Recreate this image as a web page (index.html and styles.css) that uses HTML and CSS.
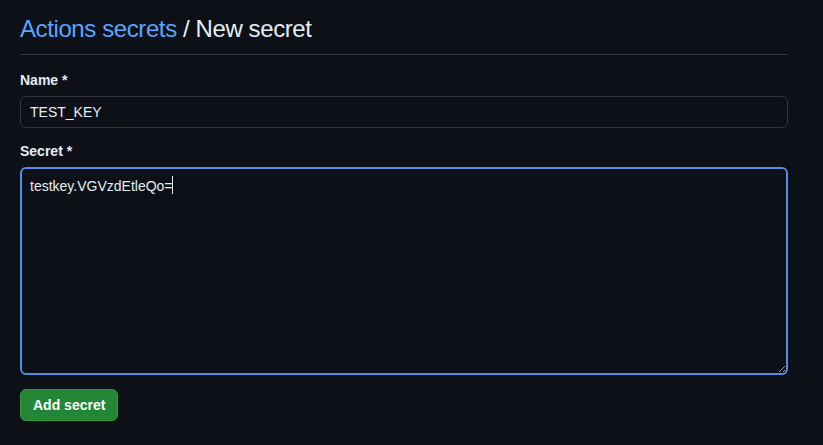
FILE: index.html
```html
<!DOCTYPE html>
<html>
    <head>
        <link rel="stylesheet" href="styles.css">
    </head>
<body>

<div class="page">
    <h1 class="title"><a href="#" class="crumb">Actions secrets</a> / New secret</h1>

    <form class="secretForm">
        <label for="name" class="fieldLabel">Name *</label>
        <input type="text" id="name" class="textInput" value="TEST_KEY"/>

        <label for="secret" class="fieldLabel">Secret *</label>
        <div class="areaWrap">
            <textarea id="secret" class="textArea">testkey.VGVzdEtleQo=</textarea>
            <span class="caret"></span>
        </div>

        <button type="button" class="addBtn">Add secret</button>
    </form>
</div>

</body>
</html>
```

FILE: styles.css
```css
body{
    margin: 0;
    background-color: #0d1117;
    color: #e6edf3;
    font-family: "Liberation Sans", Arial, sans-serif;
}
.page{
    width: 768px;
    padding: 14px 20px 0 20px;
}
.title{
    margin: 0;
    padding-bottom: 10px;
    border-bottom: 1px solid #30363d;
    font-size: 24px;
    font-weight: 400;
    letter-spacing: -0.4px;
    line-height: 30px;
    color: #e6edf3;
}
.crumb{
    color: #58a6ff;
    text-decoration: none;
}
.secretForm{
    display: flex;
    flex-direction: column;
    align-items: flex-start;
    padding-top: 15px;
}
.fieldLabel{
    font-size: 14px;
    font-weight: 700;
    line-height: 20px;
    margin-bottom: 6px;
}
.textInput{
    box-sizing: border-box;
    width: 768px;
    height: 32px;
    margin: 0 0 13px 0;
    padding: 0 9px;
    background: #0d1117;
    border: 1px solid #30363d;
    border-radius: 6px;
    color: #e6edf3;
    font-family: inherit;
    font-size: 14px;
    outline: none;
}
.areaWrap{
    position: relative;
}
.textArea{
    box-sizing: border-box;
    display: block;
    width: 768px;
    height: 208px;
    margin: 0;
    padding: 7px 8px;
    background: #0d1117;
    border: 2px solid #4f8ee6;
    border-radius: 6px;
    color: #e6edf3;
    font-family: inherit;
    font-size: 14px;
    line-height: 20px;
    outline: none;
}
.caret{
    position: absolute;
    left: 152px;
    top: 9px;
    width: 1px;
    height: 18px;
    background: #e6edf3;
}
.addBtn{
    margin-top: 14px;
    height: 32px;
    padding: 0 12px;
    background: #238636;
    border: 1px solid #2e9a40;
    border-radius: 6px;
    color: #ffffff;
    font-family: inherit;
    font-size: 14px;
    font-weight: 700;
}
```
